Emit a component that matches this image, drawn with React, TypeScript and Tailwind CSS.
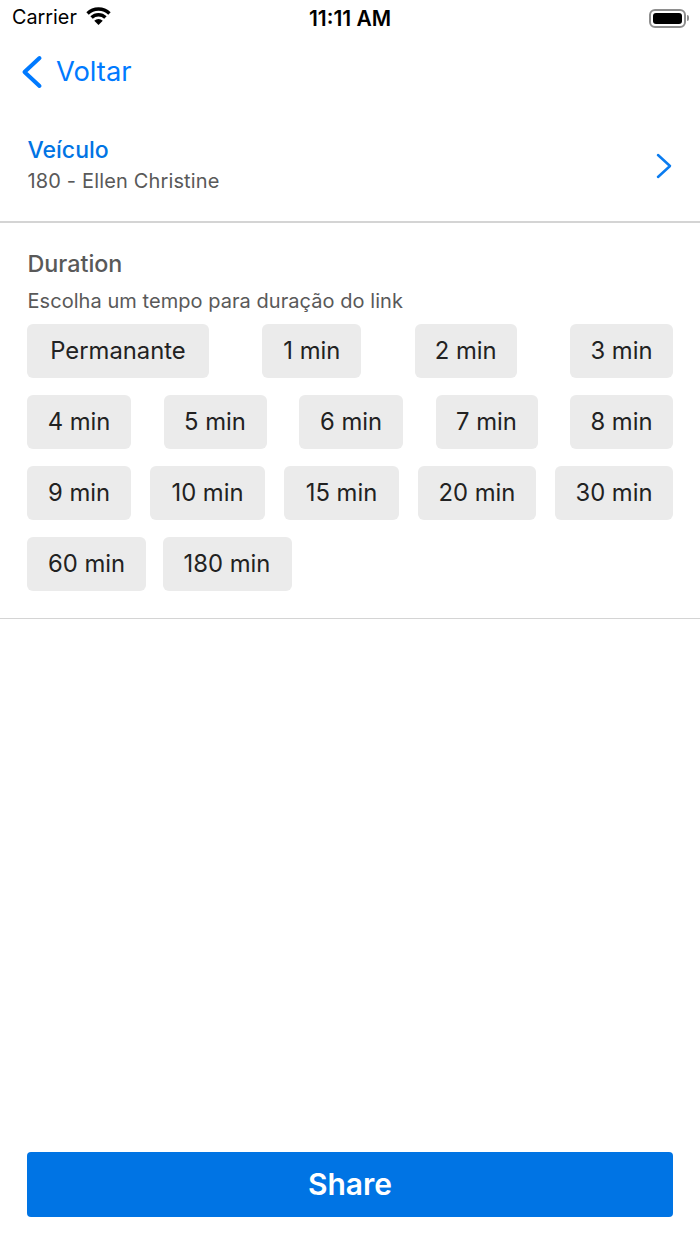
import React from "react";

const linhas = [
  [
    { label: "Permanante", w: "w-[182px]" },
    { label: "1 min", w: "w-[99px]" },
    { label: "2 min", w: "w-[102px]" },
    { label: "3 min", w: "w-[103px]" },
  ],
  [
    { label: "4 min", w: "w-[104px]" },
    { label: "5 min", w: "w-[103px]" },
    { label: "6 min", w: "w-[104px]" },
    { label: "7 min", w: "w-[102px]" },
    { label: "8 min", w: "w-[103px]" },
  ],
  [
    { label: "9 min", w: "w-[104px]" },
    { label: "10 min", w: "w-[115px]" },
    { label: "15 min", w: "w-[115px]" },
    { label: "20 min", w: "w-[118px]" },
    { label: "30 min", w: "w-[118px]" },
  ],
];

const Chip = ({ label, w }: { label: string; w: string }) => (
  <button className={`${w} h-[54px] rounded-[6px] bg-[#ebebeb] text-[23.8px] leading-none text-[#222222]`}>
    {label}
  </button>
);

const StatusBar = () => (
  <div className="h-[36px] px-3 flex items-center justify-between relative text-black">
    <div className="flex items-center gap-[9px]">
      <span className="text-[19.8px] leading-none">Carrier</span>
      <svg width="25" height="19" viewBox="0 0 25 19" fill="none" className="-mt-[2px]">
        <path d="M1.540 6.540A15.500 15.500 0 0 1 23.460 6.540" stroke="#000" strokeWidth="3.400" />
        <path d="M5.570 10.570A9.800 9.800 0 0 1 19.430 10.570" stroke="#000" strokeWidth="3.400" />
        <path d="M12.500 18L8.260 13.760A6 6 0 0 1 16.740 13.760Z" fill="#000" />
      </svg>
    </div>
    <span className="absolute left-0 right-0 text-center text-[21px] leading-none font-semibold">11:11 AM</span>
    <div className="flex items-center -mr-[1px]">
      <div className="w-[37px] h-[19px] rounded-[6px] border-2 border-[#8e8e8e] p-[2px]">
        <div className="w-full h-full rounded-[3px] bg-black" />
      </div>
      <div className="w-[2px] h-[6px] rounded-r-sm bg-[#8e8e8e] ml-[1px]" />
    </div>
  </div>
);

export default function App() {
  return (
    <div className="w-[700px] h-[1244px] bg-white flex flex-col font-['Inter',sans-serif]">
      <StatusBar />

      <div className="h-[70px] pl-[21px] pt-[1px] flex items-center gap-[13px] text-[#007aff]">
        <svg width="22" height="34" viewBox="0 0 22 34" fill="none">
          <path d="M18.500 3L3.500 17l15 14" stroke="#007aff" strokeWidth="4" strokeLinecap="round" strokeLinejoin="round" />
        </svg>
        <span className="text-[27.3px] leading-none">Voltar</span>
      </div>

      <div className="h-[117px] pl-[27.500px] pr-[28px] pt-[4px] flex items-center justify-between border-b-2 border-[#d4d4d4]">
        <div className="flex flex-col">
          <span className="text-[23px] leading-[30px] font-medium text-[#0074e4]">Veículo</span>
          <span className="text-[20px] leading-[32px] text-[#595959] tracking-[0.15px]">180 - Ellen Christine</span>
        </div>
        <svg width="16" height="26" viewBox="0 0 16 26" fill="none">
          <path d="M2 2l12 11L2 24" stroke="#0a7cf0" strokeWidth="2.500" strokeLinecap="round" strokeLinejoin="round" />
        </svg>
      </div>

      <div className="px-[27px] pt-[26px] pb-[27px] border-b border-[#d4d4d4]">
        <div className="pl-[0.500px] text-[23.3px] leading-[30px] font-medium text-[#595959]">Duration</div>
        <div className="pl-[0.500px] mt-[10px] text-[20px] leading-[24px] text-[#595959] tracking-[0.05px]">
          Escolha um tempo para duração do link
        </div>
        <div className="mt-[11px] flex flex-col gap-[17px]">
          {linhas.map((linha, i) => (
            <div key={i} className="flex justify-between">
              {linha.map((c) => (
                <Chip key={c.label} label={c.label} w={c.w} />
              ))}
            </div>
          ))}
          <div className="flex gap-[16.500px]">
            <Chip label="60 min" w="w-[119px]" />
            <Chip label="180 min" w="w-[129px]" />
          </div>
        </div>
      </div>

      <div className="flex-1" />

      <div className="px-[27px] pb-[27px]">
        <button className="w-full h-[65px] rounded-[4px] bg-[#0074e4] text-white text-[30px] font-semibold">
          Share
        </button>
      </div>
    </div>
  );
}
